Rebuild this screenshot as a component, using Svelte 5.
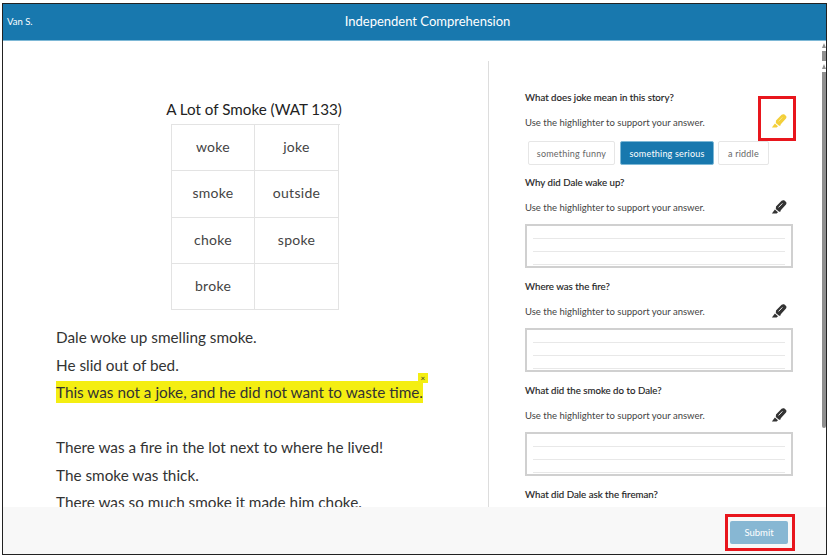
<script>
  const title = "Independent Comprehension";
  const words = ["woke", "joke", "smoke", "outside", "choke", "spoke", "broke", ""];
  const hint = "Use the highlighter to support your answer.";
  const writtenQuestions = ["Why did Dale wake up?", "Where was the fire?", "What did the smoke do to Dale?"];
</script>

{#snippet marker()}
  <svg class="marker" viewBox="0 0 16 16" aria-hidden="true">
    <path d="M5 7.6 10.6 1.8c.8-.8 2-.9 2.9-.2l1.3 1.1c.8.7.9 2 .2 2.8L9.8 11.2l-.5 1.5-1.2.1-3.3-2.9.1-1.1z" />
    <path d="M3.9 10.6 7 13.3 5.6 14.6H.9z" />
    <path class="shine" d="M7.6 8.4 11.4 4.4" />
  </svg>
{/snippet}

<div class="frame">
  <header class="topbar">
    <span class="user">Van S.</span>
    <h1>{title}</h1>
  </header>

  <main class="content">
    <section class="story">
      <h2>A Lot of Smoke (WAT 133)</h2>
      <div class="word-grid">
        {#each words as word}
          <div class="word">{word}</div>
        {/each}
      </div>
      <div class="passage">
        <p>Dale woke up smelling smoke.</p>
        <p>He slid out of bed.</p>
        <p><mark>This was not a joke, and he did not want to waste time.<span class="remove">×</span></mark></p>
        <p class="spaced">There was a fire in the lot next to where he lived!</p>
        <p>The smoke was thick.</p>
        <p>There was so much smoke it made him choke.</p>
      </div>
    </section>

    <section class="questions">
      <div class="question first">
        <h3>What does joke mean in this story?</h3>
        <div class="hint-row">
          <span>{hint}</span>
          <span class="tool active">{@render marker()}</span>
        </div>
        <div class="choices">
          <button>something funny</button>
          <button class="selected">something serious</button>
          <button>a riddle</button>
        </div>
      </div>

      {#each writtenQuestions as q}
        <div class="question">
          <h3>{q}</h3>
          <div class="hint-row">
            <span>{hint}</span>
            <span class="tool">{@render marker()}</span>
          </div>
          <div class="answer">
            <i></i><i></i><i></i>
          </div>
        </div>
      {/each}

      <div class="question">
        <h3>What did Dale ask the fireman?</h3>
      </div>
    </section>

    <div class="scrollbar">
      <span class="arrow"></span>
      <span class="stub"></span>
      <span class="arrow"></span>
      <span class="thumb"></span>
    </div>
  </main>

  <footer class="actions">
    <div class="submit-box">
      <button class="submit">Submit</button>
    </div>
  </footer>
</div>

<style>
  :global(body) {
    background: #fff;
  }

  .frame {
    box-sizing: border-box;
    width: 825px;
    height: 552px;
    margin: 3px 0 0 2px;
    border: 1px solid #222;
    display: flex;
    flex-direction: column;
    font-family: Lato, "Open Sans", sans-serif;
    color: #333;
    overflow: hidden;
  }

  .topbar {
    flex: none;
    box-sizing: border-box;
    height: 37px;
    background: #1878ae;
    border-bottom: 1px solid #7db8d6;
    color: #fff;
    display: grid;
    grid-template-columns: 1fr auto 1fr;
    align-items: center;
    padding: 0 4px 2px;
  }

  .user {
    font-size: 9.5px;
  }

  h1 {
    margin: 0;
    padding-left: 26px;
    font-size: 13px;
    font-weight: 400;
  }

  .content {
    flex: 1;
    min-height: 0;
    display: flex;
    position: relative;
    overflow: hidden;
  }

  .story {
    width: 485px;
    flex: none;
    margin-top: 20px;
    padding: 38px 0 0 53px;
    box-sizing: border-box;
    height: 100%;
  }

  .story h2 {
    margin: 0;
    width: 396px;
    text-align: center;
    font-size: 15.2px;
    line-height: 20px;
    font-weight: 400;
    color: #222;
  }

  .word-grid {
    display: grid;
    grid-template-columns: 83px 84px;
    grid-auto-rows: 46.3px;
    width: 168px;
    margin: 5px 0 0 115px;
    border-top: 1px solid #e3e3e3;
    border-left: 1px solid #e3e3e3;
  }

  .word {
    display: flex;
    align-items: center;
    justify-content: center;
    border-right: 1px solid #e3e3e3;
    border-bottom: 1px solid #e3e3e3;
    font-size: 14px;
    letter-spacing: 0.3px;
    color: #444;
    padding-bottom: 2px;
    box-sizing: border-box;
  }

  .passage {
    margin-top: 14px;
    font-size: 15.3px;
    line-height: 27.5px;
    white-space: nowrap;
    color: #333;
  }

  .passage p {
    margin: 0;
  }

  .passage .spaced {
    margin-top: 27.5px;
  }

  mark {
    position: relative;
    display: inline-block;
    line-height: 22px;
    background: #f4ee12;
    color: inherit;
  }

  .remove {
    position: absolute;
    right: -5px;
    top: -8px;
    width: 10px;
    height: 10px;
    background: #f4ee12;
    font-size: 8px;
    line-height: 10px;
    text-align: center;
  }

  .questions {
    flex: 1;
    margin-top: 20px;
    border-left: 1px solid #ddd;
    padding: 30px 0 0 36px;
    font-size: 9.5px;
    color: #444;
  }

  .question {
    width: 268px;
    margin-top: 12px;
  }

  .question.first {
    margin-top: 0;
    margin-bottom: -1px;
  }

  h3 {
    margin: 0;
    font-size: 9.7px;
    line-height: 12px;
    font-weight: 400;
    -webkit-text-stroke: 0.15px #222;
    color: #222;
  }

  .hint-row {
    display: flex;
    justify-content: space-between;
    align-items: center;
    height: 18px;
    margin-top: 10px;
    padding-right: 6px;
  }

  .marker {
    display: block;
    width: 16px;
    height: 16px;
    fill: #333;
  }

  .shine {
    fill: none;
    stroke: #fff;
    stroke-width: 0.9;
  }

  .active .marker {
    fill: #f3cf3a;
  }

  .active .shine {
    stroke: #f9e68c;
  }

  .choices {
    display: flex;
    gap: 4px;
    margin: 10px 0 0 3px;
  }

  .choices button {
    box-sizing: border-box;
    width: 51px;
    height: 24px;
    padding: 0;
    background: #fff;
    border: 1px solid #e6e6e6;
    border-radius: 2px;
    font: inherit;
    font-size: 9px;
    color: #666;
    letter-spacing: 0.2px;
  }

  .choices button:first-child {
    width: 87px;
    margin-right: 1px;
  }

  .choices .selected {
    width: 94px;
    background: #1878ae;
    border-color: #7db8d6;
    color: #fff;
  }

  .answer {
    box-sizing: border-box;
    height: 44px;
    margin-top: 8px;
    padding: 12px 6px 0;
    border: 2px solid #d0d0d0;
    display: flex;
    flex-direction: column;
    gap: 12px;
  }

  .answer i {
    display: block;
    height: 1px;
    background: #e8e8e8;
  }

  /* thin scrollbar drawn over the right edge */
  .scrollbar {
    position: absolute;
    top: 2px;
    right: 0;
    width: 4px;
    display: flex;
    flex-direction: column;
    gap: 3px;
  }

  .scrollbar span {
    display: block;
    background: #8f8f8f;
  }

  .arrow {
    height: 5px;
    clip-path: polygon(50% 0, 100% 100%, 0 100%);
  }

  .stub {
    height: 10px;
  }

  .thumb {
    height: 356px;
    border-radius: 0 0 2px 2px;
  }

  .actions {
    position: relative;
    flex: none;
    height: 47px;
    background: #f8f8f8;
    display: flex;
    justify-content: flex-end;
    align-items: center;
    padding: 4px 31px 0 0;
    box-sizing: border-box;
  }

  .submit-box {
    display: flex;
    padding: 4px 4px 4px 2px;
    border: 3px solid #e8161d;
  }

  .submit {
    width: 58px;
    height: 23px;
    background: #87b7d3;
    border: 0;
    border-radius: 2px;
    color: #fff;
    font: inherit;
    font-size: 9.5px;
  }

  .tool.active {
    border: 3px solid #e8161d;
    padding: 14px 6px 9px 10px;
    margin: -17px -9px -10px 0;
  }
</style>
